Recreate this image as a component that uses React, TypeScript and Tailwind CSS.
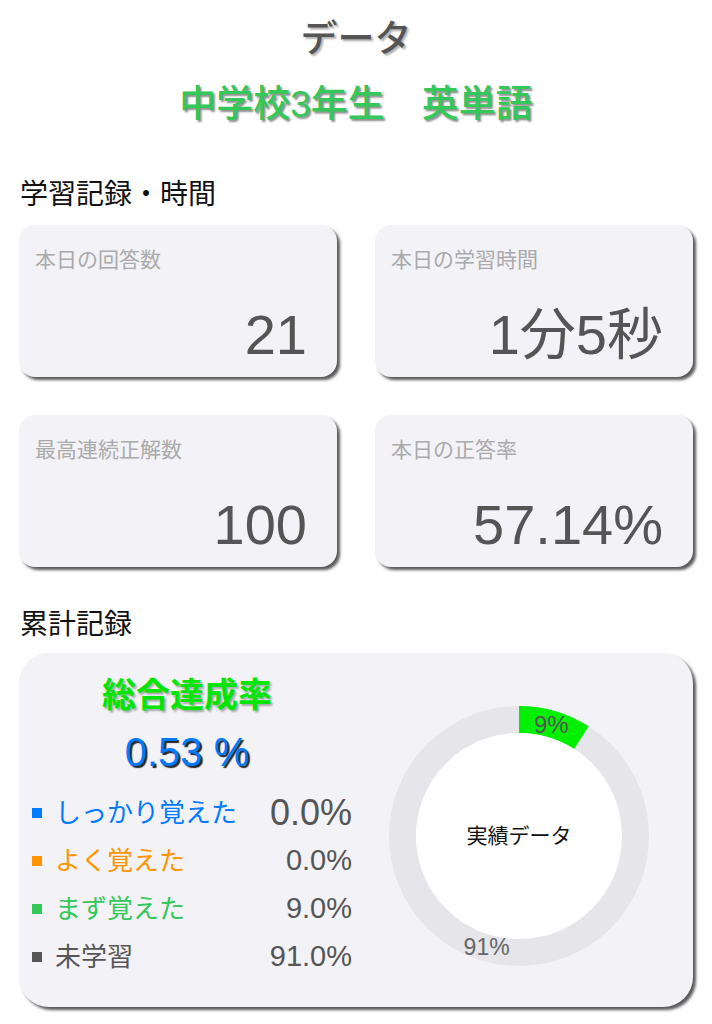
import React from 'react';

const font = { fontFamily: '"Liberation Sans", "Noto Sans CJK JP", sans-serif' };

const stats = [
  { label: '本日の回答数', value: '21' },
  { label: '本日の学習時間', value: '1分5秒' },
  { label: '最高連続正解数', value: '100' },
  { label: '本日の正答率', value: '57.14%' },
];

const legend = [
  { label: 'しっかり覚えた', value: '0.0%', color: 'text-[#007aff]', box: 'bg-[#007aff]', big: true },
  { label: 'よく覚えた', value: '0.0%', color: 'text-[#ff9500]', box: 'bg-[#ff9500]', big: false },
  { label: 'まず覚えた', value: '9.0%', color: 'text-[#34c759]', box: 'bg-[#34c759]', big: false },
  { label: '未学習', value: '91.0%', color: 'text-[#555555]', box: 'bg-[#555555]', big: false },
];

function StatCard({ label, value }: { label: string; value: string }) {
  return (
    <div className="h-[152px] rounded-[16px] bg-[#f2f2f7] shadow-[3px_3px_3px_rgba(0,0,0,0.65)] flex flex-col pl-[16px] pr-[30px]">
      <div className="mt-[22px] h-[26px] leading-[26px] text-[21px] text-[#aaaaaa]">{label}</div>
      <div className="mt-auto mb-[12px] text-right text-[56px] leading-[60px] text-[#555555]">{value}</div>
    </div>
  );
}

function Donut() {
  const cx = 130;
  const cy = 130;
  const ro = 130;
  const ri = 103;
  const pct = 0.09;
  const a = pct * Math.PI * 2;
  const x1 = cx + ro * Math.sin(a);
  const y1 = cy - ro * Math.cos(a);
  const x2 = cx + ri * Math.sin(a);
  const y2 = cy - ri * Math.cos(a);
  const arc = `M ${cx} ${cy - ro} A ${ro} ${ro} 0 0 1 ${x1} ${y1} L ${x2} ${y2} A ${ri} ${ri} 0 0 0 ${cx} ${cy - ri} Z`;
  const rl = 116;
  const m1 = a / 2;
  const m2 = a + (Math.PI * 2 - a) / 2;
  return (
    <svg width="260" height="260" viewBox="0 0 260 260">
      <circle cx={cx} cy={cy} r={(ro + ri) / 2} fill="none" stroke="#e5e5ea" strokeWidth={ro - ri} />
      <path d={arc} fill="#00f000" />
      <circle cx={cx} cy={cy} r={ri} fill="#ffffff" />
      <text x={cx + rl * Math.sin(m1)} y={cy - rl * Math.cos(m1) + 8} textAnchor="middle" fontSize="24" fill="#555555" style={font}>9%</text>
      <text x={cx + rl * Math.sin(m2)} y={cy - rl * Math.cos(m2) + 8} textAnchor="middle" fontSize="23" fill="#666666" style={font}>91%</text>
      <text x={cx} y={cy + 7} textAnchor="middle" fontSize="21" fill="#111111" style={font}>実績データ</text>
    </svg>
  );
}

export default function App() {
  return (
    <div className="w-[712px] h-[1024px] bg-white flex flex-col px-[19px]" style={font}>
      <div className="mt-[18px] h-[44px] leading-[44px] text-center text-[37px] font-medium text-[#555555] [text-shadow:2px_2px_2px_rgba(0,0,0,0.3)]">
        データ
      </div>
      <div className="mt-[21px] h-[44px] leading-[44px] text-center text-[37px] font-medium text-[#34c759] [text-shadow:2px_2px_2px_rgba(0,0,0,0.45)]">
        中学校3年生　英単語
      </div>

      <div className="mt-[53px] h-[30px] leading-[30px] text-[28px] text-[#111111] pl-[1px]">学習記録・時間</div>
      <div className="mt-[15px] grid grid-cols-2 gap-[38px]">
        {stats.map((s) => (
          <StatCard key={s.label} label={s.label} value={s.value} />
        ))}
      </div>

      <div className="mt-[43px] h-[30px] leading-[30px] text-[28px] text-[#111111] pl-[1px]">累計記録</div>
      <div className="mt-[13px] h-[354px] rounded-[30px] bg-[#f2f2f7] shadow-[3px_3px_3px_rgba(0,0,0,0.65)] flex items-start">
        <div className="w-[336px] flex flex-col pt-[22px]">
          <div className="h-[40px] leading-[40px] text-center text-[34px] font-bold text-[#00e600] [text-shadow:2px_2px_2px_rgba(0,0,0,0.3)]">
            総合達成率
          </div>
          <div className="mt-[13px] h-[48px] leading-[48px] text-center text-[40px] text-[#007aff] [text-shadow:2px_2px_1px_rgba(0,0,0,0.85)]">
            0.53 %
          </div>
          <div className="mt-[13px] flex flex-col pl-[13px]">
            {legend.map((l) => (
              <div key={l.label} className="h-[48px] flex items-center">
                <span className={`w-[10px] h-[10px] ${l.box}`} />
                <span className={`ml-[13px] text-[26px] ${l.color}`}>{l.label}</span>
                <span className={`ml-auto mr-[3px] text-[#555555] ${l.big ? 'text-[36px]' : 'text-[29px]'}`}>{l.value}</span>
              </div>
            ))}
          </div>
        </div>
        <div className="ml-[34px] mt-[53px]">
          <Donut />
        </div>
      </div>
    </div>
  );
}
